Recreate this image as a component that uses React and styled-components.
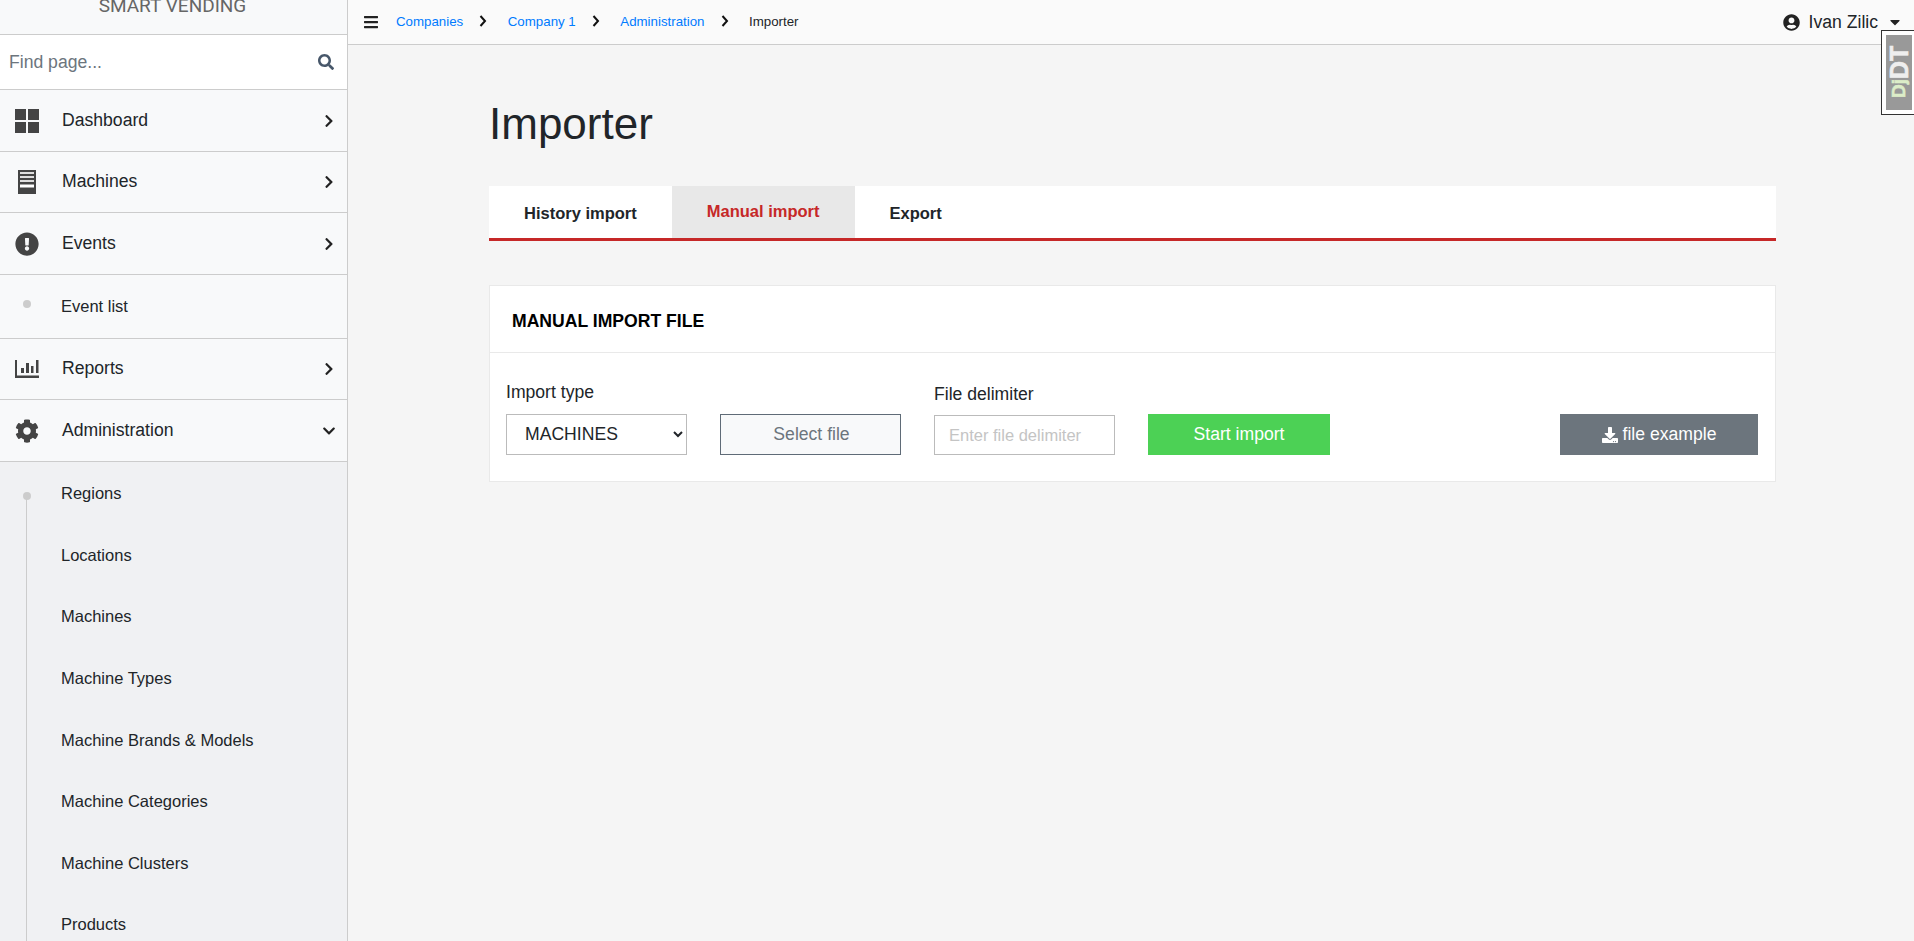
import React from "react";
import styled, { createGlobalStyle } from "styled-components";
import {
  FaBars,
  FaCaretDown,
  FaChevronDown,
  FaChevronRight,
  FaCog,
  FaDownload,
  FaExclamationCircle,
  FaSearch,
  FaUserCircle,
} from "react-icons/fa";

const GlobalStyle = createGlobalStyle`
  html, body {
    margin: 0;
    height: 100%;
    overflow: hidden;
    background: #f5f5f5;
    color: #212529;
    font-family: "Liberation Sans", Arial, sans-serif;
  }
  * { box-sizing: border-box; }
`;

const DashboardIcon = () => (
  <svg width="24" height="24" viewBox="0 0 24 24" fill="#444">
    <rect x="0" y="0" width="11" height="11" />
    <rect x="13" y="0" width="11" height="11" />
    <rect x="0" y="13" width="11" height="11" />
    <rect x="13" y="13" width="11" height="11" />
  </svg>
);

const MachineIcon = () => (
  <svg width="24" height="24" viewBox="0 0 24 24">
    <rect x="3" y="0" width="18" height="24" fill="#444" />
    <rect x="5" y="2" width="14" height="2" fill="#ddd" />
    <rect x="5" y="6" width="14" height="2" fill="#ddd" />
    <rect x="5" y="10" width="14" height="2" fill="#ddd" />
    <rect x="5" y="14.5" width="14" height="3" fill="#fff" />
  </svg>
);

const ReportsIcon = () => (
  <svg width="24" height="18" viewBox="0 0 24 18" fill="#444">
    <path d="M0 0h2v15.5h22V18H0z" />
    <rect x="6" y="8" width="3" height="5" />
    <rect x="11" y="3" width="3" height="10" />
    <rect x="16" y="6" width="2.5" height="7" />
    <rect x="21" y="0" width="2.5" height="13" />
  </svg>
);

const NAV_TOP = [
  { label: "Dashboard", icon: <DashboardIcon />, height: 62 },
  { label: "Machines", icon: <MachineIcon />, height: 61, lift: true },
  { label: "Events", icon: <FaExclamationCircle size={24} />, height: 62 },
];

const SUB_ITEMS = [
  "Regions",
  "Locations",
  "Machines",
  "Machine Types",
  "Machine Brands & Models",
  "Machine Categories",
  "Machine Clusters",
  "Products",
];

const CRUMBS = ["Companies", "Company 1", "Administration"];

export default function App() {
  return (
    <Page>
      <GlobalStyle />
      <Sidebar>
        <Brand>
          <BrandText>SMART VENDING</BrandText>
        </Brand>
        <SearchRow>
          <SearchInput placeholder="Find page..." />
          <FaSearch size={16} color="#47576a" />
        </SearchRow>
        {NAV_TOP.map((item) => (
          <NavRow key={item.label} $height={item.height}>
            <NavIcon>{item.icon}</NavIcon>
            <NavLabel $lift={item.lift}>{item.label}</NavLabel>
            <FaChevronRight size={14} color="#222" />
          </NavRow>
        ))}
        <EventRow>
          <DotCell $offset={-3}>
            <Dot />
          </DotCell>
          <SubLabel>Event list</SubLabel>
        </EventRow>
        <NavRow $height={61}>
          <NavIcon>
            <ReportsIcon />
          </NavIcon>
          <NavLabel $lift>Reports</NavLabel>
          <FaChevronRight size={14} color="#222" />
        </NavRow>
        <NavRow $height={62}>
          <NavIcon>
            <FaCog size={24} />
          </NavIcon>
          <NavLabel>Administration</NavLabel>
          <FaChevronDown size={14} color="#222" />
        </NavRow>
        <SubList>
          {SUB_ITEMS.map((item) => (
            <SubRow key={item}>
              <DotCell $offset={2}>{item === "Regions" && <Dot />}</DotCell>
              <SubLabel>{item}</SubLabel>
            </SubRow>
          ))}
        </SubList>
      </Sidebar>
      <Main>
        <TopBar>
          <FaBars size={16} color="#222" />
          <Breadcrumbs>
            {CRUMBS.map((crumb) => (
              <React.Fragment key={crumb}>
                <CrumbLink>{crumb}</CrumbLink>
                <CrumbArrow viewBox="0 0 8 12">
                  <path d="M1.5 1l4.5 5-4.5 5" />
                </CrumbArrow>
              </React.Fragment>
            ))}
            <CrumbCurrent>Importer</CrumbCurrent>
          </Breadcrumbs>
          <UserMenu>
            <FaUserCircle size={17} color="#222" />
            <UserName>Ivan Zilic</UserName>
            <FaCaretDown size={16} color="#222" />
          </UserMenu>
        </TopBar>
        <Content>
          <Title>Importer</Title>
          <Tabs>
            <Tab>History import</Tab>
            <Tab $active>Manual import</Tab>
            <Tab>Export</Tab>
          </Tabs>
          <Card>
            <CardHeader>MANUAL IMPORT FILE</CardHeader>
            <CardBody>
              <Field>
                <FieldLabel $gap={10}>Import type</FieldLabel>
                <TypeSelect defaultValue="MACHINES">
                  <option>MACHINES</option>
                  <option>PRODUCTS</option>
                </TypeSelect>
              </Field>
              <SelectFile>Select file</SelectFile>
              <Field>
                <FieldLabel $gap={9}>File delimiter</FieldLabel>
                <DelimiterInput placeholder="Enter file delimiter" />
              </Field>
              <StartButton>Start import</StartButton>
              <ExampleButton>
                <FaDownload size={16} />
                file example
              </ExampleButton>
            </CardBody>
          </Card>
        </Content>
      </Main>
      <DebugHandle>
        <DebugText>
          <DebugDj>Dj</DebugDj>DT
        </DebugText>
      </DebugHandle>
    </Page>
  );
}

const Page = styled.div`
  display: flex;
  height: 941px;
  overflow: hidden;
  position: relative;
`;

const Sidebar = styled.aside`
  width: 348px;
  flex-shrink: 0;
  height: 100%;
  overflow: hidden;
  background: #f8f9fa;
  border-right: 1px solid #ccc;
`;

const Brand = styled.div`
  height: 35px;
  border-bottom: 1px solid #ccc;
  overflow: hidden;
  display: flex;
  justify-content: center;
`;

const BrandText = styled.div`
  font-family: Roboto, sans-serif;
  font-size: 19px;
  line-height: 20px;
  color: #666;
  margin-top: -4px;
  margin-right: 2px;
`;

const SearchRow = styled.div`
  height: 55px;
  display: flex;
  align-items: center;
  padding: 0 13px 0 9px;
  background: #fff;
  border-bottom: 1px solid #ccc;
`;

const SearchInput = styled.input`
  flex: 1;
  min-width: 0;
  border: 0;
  outline: 0;
  padding: 0;
  font: 17.6px "Liberation Sans", Arial, sans-serif;
  color: #495057;

  &::placeholder {
    color: #6c757d;
    opacity: 1;
  }
`;

const NavRow = styled.div`
  height: ${(p) => p.$height}px;
  display: flex;
  align-items: center;
  padding: 0 11px 0 15px;
  border-bottom: 1px solid #ccc;
`;

const NavIcon = styled.div`
  width: 24px;
  margin-right: 23px;
  display: flex;
  justify-content: center;
  color: #444;
`;

const NavLabel = styled.span`
  flex: 1;
  font-size: 17.6px;
  padding-bottom: ${(p) => (p.$lift ? "2px" : "0")};
`;

const EventRow = styled.div`
  height: 64px;
  display: flex;
  align-items: center;
  padding-left: 15px;
  border-bottom: 1px solid #ccc;
`;

const SubList = styled.div`
  position: relative;
  background: #f0f1f3;
  height: 480px;

  &::before {
    content: "";
    position: absolute;
    left: 26px;
    top: 34px;
    bottom: 0;
    width: 1px;
    background: #ccc;
  }
`;

const SubRow = styled.div`
  height: 61.6px;
  display: flex;
  align-items: center;
  padding: 2px 0 0 15px;
`;

const DotCell = styled.div`
  width: 24px;
  margin-right: 22px;
  display: flex;
  justify-content: center;
  transform: translateY(${(p) => p.$offset}px);
`;

const Dot = styled.span`
  width: 8px;
  height: 8px;
  border-radius: 50%;
  background: #ccc;
`;

const SubLabel = styled.span`
  font-size: 16.5px;
  color: #212529;
`;

const Main = styled.main`
  flex: 1;
  min-width: 0;
`;

const TopBar = styled.header`
  height: 45px;
  display: flex;
  align-items: center;
  padding: 0 11px 0 15px;
  background: #fafafa;
  border-bottom: 1px solid #ccc;
`;

const Breadcrumbs = styled.nav`
  flex: 1;
  display: flex;
  align-items: center;
  margin-left: 17px;
  padding-bottom: 2px;
  font-size: 13.3px;
`;

const CrumbLink = styled.a`
  color: #007bff;
`;

const CrumbCurrent = styled.span`
  color: #212529;
`;

const CrumbArrow = styled.svg`
  width: 8px;
  height: 12px;
  margin: 0 20.5px 0 16px;

  path {
    fill: none;
    stroke: #111;
    stroke-width: 2;
  }
`;

const UserMenu = styled.div`
  display: flex;
  align-items: center;
  gap: 9px;
`;

const UserName = styled.span`
  font-size: 17.6px;
`;

const Content = styled.div`
  width: 1287px;
  margin-left: 141px;
`;

const Title = styled.h1`
  margin: 51px 0 0;
  font-size: 44px;
  line-height: 56px;
  font-weight: 400;
`;

const Tabs = styled.div`
  display: flex;
  margin-top: 34px;
  height: 55px;
  background: #fff;
  border-bottom: 3px solid #c62828;
`;

const Tab = styled.div`
  padding: ${(p) => (p.$active ? "0 35px 2px" : "2px 35px 0")};
  display: flex;
  align-items: center;
  justify-content: center;
  font-size: 16.5px;
  font-weight: 700;
  background: ${(p) => (p.$active ? "#e8e8e8" : "transparent")};
  color: ${(p) => (p.$active ? "#c62828" : "#212529")};
`;

const Card = styled.section`
  margin-top: 44px;
  height: 197px;
  background: #fff;
  border: 1px solid #e9e9e9;
`;

const CardHeader = styled.h2`
  margin: 0;
  height: 67px;
  padding: 4px 0 0 22px;
  display: flex;
  align-items: center;
  font-size: 17.6px;
  font-weight: 700;
  color: #000;
  border-bottom: 1px solid #e9e9e9;
`;

const CardBody = styled.div`
  display: flex;
  align-items: flex-end;
  padding: 0 17px 0 16px;
  height: 102px;
`;

const Field = styled.div`
  display: flex;
  flex-direction: column;
  margin-right: 33px;
`;

const FieldLabel = styled.label`
  font-size: 17.6px;
  line-height: 24px;
  margin-bottom: ${(p) => p.$gap}px;
`;

const TypeSelect = styled.select`
  width: 181px;
  height: 41px;
  padding: 0 14px 2px;
  font: 17.6px "Liberation Sans", Arial, sans-serif;
  color: #212529;
  background: #fff;
  border: 1px solid #bbb;
  border-radius: 0;
`;

const SelectFile = styled.button`
  width: 181px;
  height: 41px;
  margin-right: 33px;
  padding: 0 0 0 2px;
  font: 17.6px "Liberation Sans", Arial, sans-serif;
  color: #6c757d;
  background: #f8f9fa;
  border: 1px solid #5f6b77;
  border-radius: 0;
`;

const DelimiterInput = styled.input`
  width: 181px;
  height: 40px;
  padding: 0 14px;
  font: 16.5px "Liberation Sans", Arial, sans-serif;
  background: #fff;
  border: 1px solid #bbb;
  border-radius: 0;

  &::placeholder {
    color: #c4c4c4;
    opacity: 1;
  }
`;

const ActionButton = styled.button`
  height: 41px;
  border: 0;
  border-radius: 0;
  color: #fff;
  font: 17.6px "Liberation Sans", Arial, sans-serif;
`;

const StartButton = styled(ActionButton)`
  width: 182px;
  background: #4cd155;
`;

const ExampleButton = styled(ActionButton)`
  width: 198px;
  margin-left: auto;
  background: #6c757d;
  display: flex;
  align-items: center;
  justify-content: center;
  gap: 5px;
`;

const DebugHandle = styled.div`
  position: absolute;
  top: 30px;
  right: 0;
  width: 33px;
  height: 85px;
  padding: 4px 0 4px 4px;
  background: #fff;
  border: 1px solid #333;
  border-right: 0;
`;

const DebugText = styled.div`
  height: 100%;
  background: #999;
  color: #eee;
  font: 700 25px/26px "Liberation Sans", Arial, sans-serif;
  -webkit-text-stroke: 0.6px currentColor;
  writing-mode: vertical-rl;
  transform: rotate(180deg);
  text-align: left;
  padding-top: 12px;
  overflow: hidden;
`;

const DebugDj = styled.span`
  color: #dcedc8;
  font-size: 19px;
`;
